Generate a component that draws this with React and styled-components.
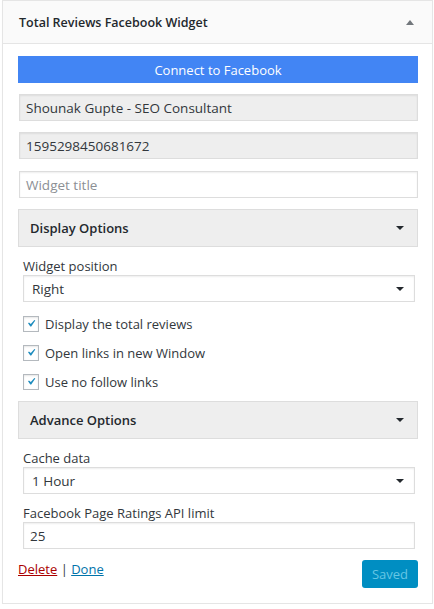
import React from "react";
import styled, { createGlobalStyle } from "styled-components";

const Global = createGlobalStyle`
  body {
    margin: 0;
    background: #ffffff;
    font-family: "Open Sans", "Noto Sans", sans-serif;
    font-size: 13px;
    color: #32373c;
  }
`;

const Widget = styled.div`
  margin-left: 2px;
  width: 431px;
  height: 604px;
  box-sizing: border-box;
  border: 1px solid #e5e5e5;
  border-top: none;
  background: #fff;
  box-shadow: 0 1px 1px rgba(0, 0, 0, 0.04);
`;

const Header = styled.div`
  height: 44px;
  box-sizing: border-box;
  border-top: 1px solid #e5e5e5;
  border-bottom: 1px solid #e5e5e5;
  background: #fafafa;
  display: flex;
  align-items: center;
  justify-content: space-between;
  padding: 0 18px 0 16px;
`;

const Title = styled.h3`
  margin: 0;
  font-size: 12.5px;
  font-weight: 600;
  color: #23282d;
`;

const Caret = styled.span`
  width: 0;
  height: 0;
  border-left: 4px solid transparent;
  border-right: 4px solid transparent;
  ${(p) =>
    p.$up
      ? "border-bottom: 5px solid #72777c;"
      : `border-top: 4px solid ${p.$color || "#23282d"};`}
`;

const Body = styled.div`
  padding: 12px 14px 15px 15px;
`;

const ConnectButton = styled.div`
  height: 27px;
  background: #4285f4;
  color: #fff;
  display: flex;
  align-items: center;
  justify-content: center;
  font-size: 13px;
  margin-bottom: 11px;
`;

const Field = styled.div`
  height: 27px;
  box-sizing: border-box;
  margin: ${(p) => p.$margin || "0 0 12px 1px"};
  border: 1px solid #dddddd;
  box-shadow: inset 0 1px 2px rgba(0, 0, 0, 0.07);
  background: ${(p) => (p.$readonly ? "#eeeeee" : "#ffffff")};
  color: ${(p) => (p.$placeholder ? "#8c8f94" : "#32373c")};
  display: flex;
  align-items: center;
  justify-content: space-between;
  padding: 0 10px 0 ${(p) => p.$pad || "6px"};
  font-size: 13.5px;
`;

const SectionHeader = styled.div`
  height: 38px;
  box-sizing: border-box;
  background: #eeeeee;
  border: 1px solid #dddddd;
  display: flex;
  align-items: center;
  justify-content: space-between;
  padding: 0 13px 0 11px;
  font-weight: 600;
  color: #23282d;
  margin-top: ${(p) => p.$top || "0"};
`;

const SectionBody = styled.div`
  padding: 0 3px 0 5px;
`;

const Label = styled.div`
  line-height: 18px;
  margin-top: 10px;
  color: #32373c;
`;

const CheckList = styled.div`
  padding-top: 7px;
`;

const CheckRow = styled.div`
  height: 29px;
  display: flex;
  align-items: center;
  gap: 6px;
`;

const Box = styled.span`
  width: 16px;
  height: 16px;
  box-sizing: border-box;
  border: 1px solid #b4b9be;
  background: #fff;
  box-shadow: inset 0 1px 2px rgba(0, 0, 0, 0.1);
  display: flex;
  align-items: center;
  justify-content: center;
`;

const Footer = styled.div`
  display: flex;
  justify-content: space-between;
  align-items: flex-start;
  margin-top: 11px;
`;

const Links = styled.div`
  color: #32373c;
`;

const Link = styled.a`
  color: ${(p) => p.$color};
  text-decoration: underline;
`;

const SavedButton = styled.div`
  width: 56px;
  height: 28px;
  box-sizing: border-box;
  border-radius: 3px;
  background: #008ec2;
  color: #66c6e4;
  display: flex;
  align-items: center;
  justify-content: center;
  font-size: 13px;
`;

function Check({ label }) {
  return (
    <CheckRow>
      <Box>
        <svg width="15" height="15" viewBox="0 0 20 20">
          <path
            d="M14.83 4.89l1.34.94-5.81 8.38H9.02L5.78 9.67l1.34-1.25 2.57 2.4z"
            fill="#1e8cbe"
          />
        </svg>
      </Box>
      <span>{label}</span>
    </CheckRow>
  );
}

export default function App() {
  return (
    <>
      <Global />
      <Widget>
        <Header>
          <Title>Total Reviews Facebook Widget</Title>
          <Caret $up />
        </Header>
        <Body>
          <ConnectButton>Connect to Facebook</ConnectButton>
          <Field $readonly $margin="0 0 11px 1px">Shounak Gupte - SEO Consultant</Field>
          <Field $readonly>1595298450681672</Field>
          <Field $placeholder $margin="0 0 11px 1px">Widget title</Field>

          <SectionHeader>
            Display Options
            <Caret />
          </SectionHeader>
          <SectionBody>
            <Label>Widget position</Label>
            <Field $margin="0" $pad="8px">
              Right
              <Caret />
            </Field>
            <CheckList>
              <Check label="Display the total reviews" />
              <Check label="Open links in new Window" />
              <Check label="Use no follow links" />
            </CheckList>
          </SectionBody>

          <SectionHeader $top="5px">
            Advance Options
            <Caret />
          </SectionHeader>
          <SectionBody>
            <Label>Cache data</Label>
            <Field $margin="0" $pad="8px">
              1 Hour
              <Caret />
            </Field>
            <Label>Facebook Page Ratings API limit</Label>
            <Field $margin="0">25</Field>
          </SectionBody>

          <Footer>
            <Links>
              <Link $color="#a00">Delete</Link> | <Link $color="#0073aa">Done</Link>
            </Links>
            <SavedButton>Saved</SavedButton>
          </Footer>
        </Body>
      </Widget>
    </>
  );
}
